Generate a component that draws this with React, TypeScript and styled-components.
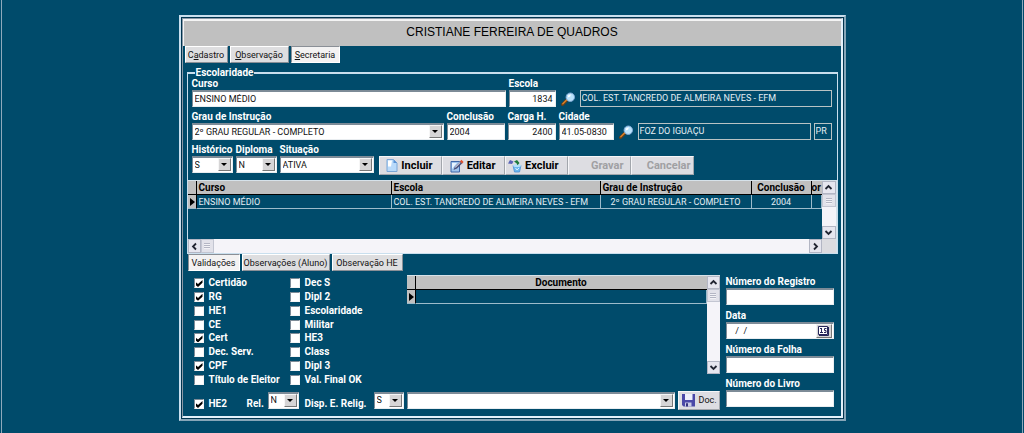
import React from "react";
import styled, { createGlobalStyle, css } from "styled-components";

const navy = "#004b6b";
const silver = "#c0c0c0";
const pale = "#c9dfee";

const GlobalStyle = createGlobalStyle`
  *, *::before, *::after { box-sizing: border-box; }
  body {
    margin: 0;
    background: ${navy};
    color: #fff;
    font: 9px/12px Roboto, "Liberation Sans", Arial, sans-serif;
  }
  button, input, select { font: inherit; margin: 0; border-radius: 0; }
`;

const Page = styled.main`
  min-height: 100vh;
  margin: 0 1px;
  padding-top: 15px;
  border: solid #8fa9bb;
  border-width: 0 1px;
`;

const Frame = styled.div`
  width: 100%;
  max-width: 667px;
  margin: 0 auto;
  padding: 1px;
  border: 2px solid ${pale};
  border-right-color: #86a6b8;
  border-bottom-color: #86a6b8;
  background: #00344f;
`;

const Panel = styled.div`
  border: 1px solid #8b98a6;
  border-right: 2px solid #e3f1fa;
  border-bottom: 2px solid #e3f1fa;
  padding-bottom: 6px;
  background: ${navy};
`;

const Title = styled.h1`
  margin: 0;
  height: 27px;
  border-top: 2px solid #f4f4f4;
  border-left: 1px solid #f4f4f4;
  background: ${silver};
  color: #000;
  text-align: center;
  font: 12px/22px "Liberation Sans", Arial, sans-serif;
`;

const Tabs = styled.div`
  display: flex;
  gap: 2px;
  padding-left: ${(p: { $inset: number }) => p.$inset}px;
`;

const Tab = styled.button<{ $active?: boolean; $wide?: number }>`
  width: ${(p) => p.$wide}px;
  height: 17px;
  padding: 0;
  white-space: nowrap;
  color: #111;
  line-height: 14px;
  border: 1px solid #fff;
  border-right-color: #8a8f96;
  border-bottom-color: #8a8f96;
  background: #dedee0;
  ${(p) => p.$active && css`
    background: #f3f2f2;
    border-color: #8a8f96 #fff #fff #8a8f96;
  `}
`;

const Group = styled.fieldset`
  min-width: 0;
  margin: 4px 3px 0 4px;
  padding: 0;
  border: 1px solid ${pale};
  border-top-width: 2px;
`;

const boldText = css`
  font: bold 10px/12px Roboto, "Liberation Sans", sans-serif;
  white-space: nowrap;
`;

const Legend = styled.legend`
  ${boldText}
  line-height: 11px;
  margin-left: 7px;
  padding: 0 1px;
`;

const Rows = styled.div`
  display: flex;
  flex-direction: column;
  gap: 4px;
  padding: 0 5px 0 4px;
`;

const FormRow = styled.div`
  display: flex;
  align-items: flex-start;
  gap: 3px;
`;

const FieldBox = styled.div<{ $w?: number }>`
  display: flex;
  flex-direction: column;
  flex: ${(p) => (p.$w ? `0 0 ${p.$w}px` : "1 1 0")};
  min-width: 0;
`;

const Label = styled.label`
  ${boldText}
`;

const sunken = css`
  width: 100%;
  height: 17px;
  padding: 0 2px 1px;
  border: 1px solid #e9edf0;
  border-top: 2px solid #7d8b97;
  border-left-color: #7d8b97;
  background: #fff;
  color: #111;
  outline: none;
`;

const TextBox = styled.input<{ $right?: boolean }>`
  ${sunken}
  text-align: ${(p) => (p.$right ? "right" : "left")};
`;

const ReadOnlyBox = styled.input<{ $w?: number }>`
  flex: ${(p) => (p.$w ? `0 0 ${p.$w}px` : "1 1 0")};
  min-width: 0;
  height: 17px;
  margin-top: 12px;
  padding: 0 1px 1px;
  border: 1px solid #b9c3c4;
  background: ${navy};
  color: #e4eef4;
  outline: 0;
`;

const Combo = styled.div`
  position: relative;
  display: flex;
  width: 100%;
`;

const ComboSelect = styled.select`
  ${sunken}
  appearance: none;
`;

const ComboArrow = styled.span`
  position: absolute;
  right: 2px;
  top: 2px;
  width: 13px;
  height: 13px;
  pointer-events: none;
  border: 1px solid #f6f6f6;
  border-right-color: #777;
  border-bottom-color: #777;
  background: #d6d5d6;
  &::after {
    content: "";
    display: block;
    width: 6px;
    margin: 4px 0 0 2px;
    border: solid transparent;
    border-width: 3px 3px 0;
    border-top-color: #000;
  }
`;

const FindButton = styled.button`
  flex: 0 0 18px;
  height: 17px;
  margin-top: 12px;
  padding: 1px 0 0 2px;
  border: 0;
  background: none;
  line-height: 0;
`;

const ButtonBar = styled.div`
  display: flex;
  margin: 12px 0 0 2px;
`;

const ActionButton = styled.button`
  ${boldText}
  display: flex;
  align-items: center;
  justify-content: flex-end;
  gap: 3px;
  width: 63px;
  height: 19px;
  padding: 0 8px 0 0;
  border: 1px solid #f6f6f8;
  border-right-color: #a2a6ac;
  border-bottom-color: #a2a6ac;
  background: #dddde2;
  color: #000;
  font-size: 11px;
  &:disabled { color: #a0a0a3; padding-right: 6px; }
  &:last-child { padding-right: 2px; }
`;

const GridFrame = styled.div`
  display: grid;
  grid-template-columns: 1fr 14px;
  grid-template-rows: 58px 14px;
  margin-top: 5px;
  border-top: 1px solid #d6e2ea;
  border-right: 1px solid #d6e2ea;
  background: ${navy};
`;

const DataTable = styled.table`
  width: 100%;
  align-self: start;
  table-layout: fixed;
  border-collapse: separate;
  border-spacing: 0;
`;

const HeadCell = styled.th<{ $center?: boolean }>`
  ${boldText}
  height: 14px;
  padding: 0 2px;
  overflow: hidden;
  border-right: 1px solid #000;
  border-bottom: 1px solid #000;
  background: ${silver};
  color: #000;
  text-align: ${(p) => (p.$center ? "center" : "left")};
  &:last-child { padding: 0; border-right: 0; }
`;

const Cell = styled.td<{ $center?: boolean }>`
  height: 14px;
  padding: 0 2px;
  overflow: hidden;
  white-space: nowrap;
  border-right: 1px solid #9dbccb;
  border-bottom: 1px solid #9dbccb;
  color: #e4eef4;
  text-align: ${(p) => (p.$center ? "center" : "left")};
`;

const MarkerCell = styled.td`
  height: 14px;
  padding: 0 0 0 2px;
  border-right: 1px solid #000;
  border-bottom: 1px solid #9dbccb;
  background: ${silver};
  &::after {
    content: "";
    display: block;
    width: 5px;
    border: solid transparent;
    border-width: 4px 0 4px 5px;
    border-left-color: #000;
  }
`;

const ScrollTrack = styled.div<{ $across?: boolean }>`
  display: flex;
  flex-direction: ${(p) => (p.$across ? "row" : "column")};
  background: #f5f4f9;
`;

const ScrollButton = styled.button`
  display: grid;
  place-items: center;
  flex: 0 0 13px;
  min-width: 13px;
  padding: 0;
  border: 1px solid #b3b6c4;
  background: #e6e6ef;
  line-height: 0;
`;

const ScrollThumb = styled.span`
  flex: 0 0 13px;
  display: grid;
  place-items: center;
  border: 1px solid #c3c6d2;
  background: #e2e2ea;
  &::after {
    content: "";
    width: 6px;
    height: 6px;
    background: repeating-linear-gradient(#b4b6c4 0 1px, #f2f2f6 1px 2px);
  }
`;

const Spacer = styled.span`
  flex: 1;
`;

const Corner = styled.span`
  background: #dcdce0;
`;

const Lower = styled.section`
  display: flex;
  align-items: flex-start;
  gap: 6px;
  padding: 4px 7px 0 11px;
`;

const LowerMain = styled.div`
  flex: 1;
  min-width: 0;
`;

const LowerTop = styled.div`
  display: flex;
  height: 115px;
  align-items: flex-start;
`;

const Checks = styled.div`
  display: grid;
  grid-template-columns: 96px 117px;
  grid-template-rows: repeat(8, 12px);
  grid-auto-flow: column;
  align-content: space-between;
  height: 111px;
  padding-top: 2px;
`;

const CheckLabel = styled.label`
  ${boldText}
  display: flex;
  align-items: center;
  gap: 5px;
`;

const CheckBox = styled.input`
  appearance: none;
  width: 10px;
  height: 10px;
  border: 1px solid #f4f4f4;
  border-top-color: #7d8b97;
  border-left-color: #7d8b97;
  background: #fff;
  &:checked::after {
    content: "";
    display: block;
    width: 7px;
    height: 7px;
    margin: 1px 0 0 1px;
    background: #000;
    clip-path: polygon(0 29%, 36% 58%, 100% 0, 100% 40%, 36% 100%, 0 70%);
  }
`;

const DocGrid = styled.div`
  flex: 1;
  display: grid;
  grid-template-columns: 1fr 13px;
  height: 99px;
  border-top: 1px solid #d6e2ea;
`;

const BottomRow = styled.div`
  display: flex;
  align-items: center;
  height: 20px;
`;

const LowLabel = styled.div<{ $w: number }>`
  flex: 0 0 ${(p) => p.$w}px;
  align-self: flex-end;
`;

const ComboSlot = styled.div<{ $w?: number; $gap: number }>`
  flex: ${(p) => (p.$w ? `0 0 ${p.$w}px` : "1")};
  margin-right: ${(p) => p.$gap}px;
`;

const DocButton = styled.button`
  display: flex;
  align-items: center;
  gap: 4px;
  width: 42px;
  height: 19px;
  padding: 0 0 0 3px;
  border: 1px solid #f6f6f8;
  border-right-color: #a2a6ac;
  border-bottom-color: #a2a6ac;
  background: #dddde2;
  color: #111;
`;

const Registry = styled.div`
  flex: 0 0 108px;
  display: flex;
  flex-direction: column;
  gap: 5px;
  padding-top: 1px;
`;

const DateBox = styled.div`
  position: relative;
  display: flex;
`;

const CalendarButton = styled.button`
  position: absolute;
  right: 2px;
  top: 2px;
  width: 16px;
  height: 14px;
  padding: 0;
  border: 1px solid #f4f4f4;
  border-right-color: #777;
  border-bottom-color: #777;
  background: #d6d5d6;
  line-height: 0;
`;

const Magnifier = () => (
  <svg width="15" height="14" viewBox="0 0 15 14" aria-hidden="true">
    <path d="M1.500 12.500 6 8" stroke="#6b3f14" strokeWidth="3" strokeLinecap="round" />
    <path d="M1.800 11.800 5.800 7.800" stroke="#d9822b" strokeWidth="1.400" strokeLinecap="round" />
    <circle cx="9.300" cy="5.200" r="4.200" fill="#b9e2fb" stroke="#7fa9d6" strokeWidth="1" />
    <path d="M6.800 5.400a2.600 2.600 0 0 1 3-2.800l-.6 2z" fill="#fff" />
  </svg>
);

const PageIcon = () => (
  <svg width="12" height="13" viewBox="0 0 12 13" aria-hidden="true">
    <path d="M1 .5h6.500L11 4v8.500H1z" fill="#b9dafa" stroke="#7ba6d6" />
    <path d="M2 1.500h4l-1 6H2z" fill="#fff" />
    <path d="M7.500.5V4H11z" fill="#5b93d6" />
  </svg>
);

const EditIcon = () => (
  <svg width="14" height="14" viewBox="0 0 14 14" aria-hidden="true">
    <path d="M1 2.500h8.500v10.500H1z" fill="#9fc4ee" stroke="#3f66a8" />
    <path d="M2 4h5L2 10z" fill="#e8f4ff" />
    <path d="M3.500 11 5 7.500 10.500 2l2 2L7 9.600z" fill="#4a4f78" />
    <path d="m10 2.400 1.400-1.600 2.200 2.200-1.500 1.500z" fill="#e0502e" />
    <path d="m4.800 8 5-5 .8.800-5 5z" fill="#c9cde0" />
  </svg>
);

const DeleteIcon = () => (
  <svg width="14" height="14" viewBox="0 0 14 14" aria-hidden="true">
    <path d="M5 6.500h8l-1.500 6.500H6.500z" fill="#6db8ee" stroke="#4c8dd0" strokeWidth=".8" />
    <ellipse cx="9" cy="6.600" rx="4" ry="1.500" fill="#b5e0fa" />
    <path d="M0 4.500 2 1l3.500 1.500L4 5z" fill="#5a64b8" />
    <path d="m6 2.500 3-1.500 2.500 3-2 2.300-1-2z" fill="#1d7a3c" />
    <path d="m7.500 9 1.500 2L11 9" fill="none" stroke="#d5efff" />
  </svg>
);

const FloppyIcon = () => (
  <svg width="13" height="14" viewBox="0 0 13 14" aria-hidden="true">
    <path d="M0 1h13v12.500H1.500L0 12z" fill="#4a48a8" />
    <path d="M3 1h7.500v6H3z" fill="#eef0fb" />
    <path d="M3 9.500h6.500v4H3z" fill="#c9cbe6" />
    <path d="M4 10.300h2v3.200H4z" fill="#33317f" />
  </svg>
);

const CalendarIcon = () => (
  <svg width="11" height="10" viewBox="0 0 11 10" aria-hidden="true">
    <path d="M.5.5h9v8h-9z" fill="#fff" stroke="#26265a" />
    <path d="M10.500 1v8.500H1" fill="none" stroke="#26265a" />
    <path d="M3.500 2v5M2 2.500h1.500M2 6.500h3M8.500 2.500h-2v2h1.500v2H6" fill="none" stroke="#26265a" />
  </svg>
);

const turns = { up: 0, right: 90, down: 180, left: 270 };

const Arrow = ({ to }: { to: keyof typeof turns }) => (
  <ScrollButton aria-label={to}>
    <svg width="9" height="9" viewBox="0 0 9 9" aria-hidden="true">
      <path d="M1.500 6 4.500 3l3 3" transform={`rotate(${turns[to]} 4.500 4.500)`} fill="none" stroke="#222633" strokeWidth="1.800" />
    </svg>
  </ScrollButton>
);

const VerticalScroll = () => (
  <ScrollTrack>
    <Arrow to="up" />
    <ScrollThumb />
    <Spacer />
    <Arrow to="down" />
  </ScrollTrack>
);

type FieldProps = { id: string; label: string; value?: string; w?: number; right?: boolean };

const Field = ({ id, label, value = "", w, right }: FieldProps) => (
  <FieldBox $w={w}>
    <Label htmlFor={id}>{label}</Label>
    <TextBox id={id} defaultValue={value} $right={right} />
  </FieldBox>
);

const Dropdown = ({ id, value, name }: { id: string; value: string; name?: string }) => (
  <Combo>
    <ComboSelect id={id} aria-label={name}>
      <option>{value}</option>
    </ComboSelect>
    <ComboArrow />
  </Combo>
);

const SelectField = ({ id, label, value = "", w }: FieldProps) => (
  <FieldBox $w={w}>
    <Label htmlFor={id}>{label}</Label>
    <Dropdown id={id} value={value} />
  </FieldBox>
);

const Check = ({ text, on }: { text: string; on?: boolean }) => (
  <CheckLabel>
    <CheckBox type="checkbox" defaultChecked={on} />
    {text}
  </CheckLabel>
);

const checks: [string, boolean][] = [
  ["Certidão", true], ["RG", true], ["HE1", false], ["CE", false],
  ["Cert", true], ["Dec. Serv.", false], ["CPF", true], ["Título de Eleitor", false],
  ["Dec S", false], ["Dipl 2", false], ["Escolaridade", false], ["Militar", false],
  ["HE3", false], ["Class", false], ["Dipl 3", false], ["Val. Final OK", false],
];

export default function App() {
  return (
    <Page>
      <GlobalStyle />
      <Frame>
        <Panel>
          <Title>CRISTIANE FERREIRA DE QUADROS</Title>
          <Tabs $inset={2}>
            <Tab $wide={43}>C<u>a</u>dastro</Tab>
            <Tab $wide={59}><u>O</u>bservação</Tab>
            <Tab $wide={49} $active><u>S</u>ecretaria</Tab>
          </Tabs>

          <Group>
            <Legend>Escolaridade</Legend>
            <Rows>
              <FormRow>
                <Field id="curso" label="Curso" value="ENSINO MÉDIO" />
                <Field id="escola" label="Escola" value="1834" w={47} right />
                <FindButton aria-label="Buscar escola"><Magnifier /></FindButton>
                <ReadOnlyBox $w={252} readOnly aria-label="Nome da escola" value="COL. EST. TANCREDO DE ALMEIRA NEVES - EFM" />
              </FormRow>
              <FormRow>
                <SelectField id="grau" label="Grau de Instrução" value="2º GRAU REGULAR - COMPLETO" />
                <Field id="conclusao" label="Conclusão" value="2004" w={58} />
                <Field id="carga" label="Carga H." value="2400" w={48} right />
                <Field id="cidade" label="Cidade" value="41.05-0830" w={55} />
                <FindButton aria-label="Buscar cidade"><Magnifier /></FindButton>
                <ReadOnlyBox $w={173} readOnly aria-label="Nome da cidade" value="FOZ DO IGUAÇU" />
                <ReadOnlyBox $w={18} readOnly aria-label="UF" value="PR" />
              </FormRow>
              <FormRow>
                <SelectField id="historico" label="Histórico" value="S" w={41} />
                <SelectField id="diploma" label="Diploma" value="N" w={41} />
                <SelectField id="situacao" label="Situação" value="ATIVA" w={94} />
                <ButtonBar>
                  <ActionButton><PageIcon />Incluir</ActionButton>
                  <ActionButton><EditIcon />Editar</ActionButton>
                  <ActionButton><DeleteIcon />Excluir</ActionButton>
                  <ActionButton disabled>Gravar</ActionButton>
                  <ActionButton disabled>Cancelar</ActionButton>
                </ButtonBar>
              </FormRow>
            </Rows>

            <GridFrame>
              <DataTable>
                <colgroup>
                  <col style={{ width: 9 }} />
                  <col />
                  <col style={{ width: 209 }} />
                  <col style={{ width: 151 }} />
                  <col style={{ width: 60 }} />
                  <col style={{ width: 10 }} />
                </colgroup>
                <thead>
                  <tr>
                    <HeadCell />
                    <HeadCell>Curso</HeadCell>
                    <HeadCell>Escola</HeadCell>
                    <HeadCell>Grau de Instrução</HeadCell>
                    <HeadCell $center>Conclusão</HeadCell>
                    <HeadCell>or</HeadCell>
                  </tr>
                </thead>
                <tbody>
                  <tr>
                    <MarkerCell />
                    <Cell>ENSINO MÉDIO</Cell>
                    <Cell>COL. EST. TANCREDO DE ALMEIRA NEVES - EFM</Cell>
                    <Cell $center>2º GRAU REGULAR - COMPLETO</Cell>
                    <Cell $center>2004</Cell>
                    <Cell />
                  </tr>
                </tbody>
              </DataTable>
              <VerticalScroll />
              <ScrollTrack $across>
                <Arrow to="left" />
                <ScrollThumb />
                <Spacer />
                <Arrow to="right" />
              </ScrollTrack>
              <Corner />
            </GridFrame>
          </Group>

          <Tabs $inset={5}>
            <Tab $wide={52} $active>Validações</Tab>
            <Tab $wide={88}>Observações (Aluno)</Tab>
            <Tab $wide={71}>Observação HE</Tab>
          </Tabs>

          <Lower>
            <LowerMain>
              <LowerTop>
                <Checks>
                  {checks.map(([text, on]) => <Check key={text} text={text} on={on} />)}
                </Checks>
                <DocGrid>
                  <DataTable>
                    <colgroup>
                      <col style={{ width: 9 }} />
                      <col />
                    </colgroup>
                    <thead>
                      <tr>
                        <HeadCell />
                        <HeadCell $center>Documento</HeadCell>
                      </tr>
                    </thead>
                    <tbody>
                      <tr>
                        <MarkerCell />
                        <Cell />
                      </tr>
                    </tbody>
                  </DataTable>
                  <VerticalScroll />
                </DocGrid>
              </LowerTop>
              <BottomRow>
                <LowLabel $w={53}><Check text="HE2" on /></LowLabel>
                <LowLabel $w={21}><Label htmlFor="rel">Rel.</Label></LowLabel>
                <ComboSlot $w={31} $gap={6}><Dropdown id="rel" value="N" /></ComboSlot>
                <LowLabel $w={69}><Label htmlFor="disp">Disp. E. Relig.</Label></LowLabel>
                <ComboSlot $w={30} $gap={3}><Dropdown id="disp" value="S" /></ComboSlot>
                <ComboSlot $gap={3}><Dropdown id="documento" name="Documento" value="" /></ComboSlot>
                <DocButton><FloppyIcon />Doc.</DocButton>
              </BottomRow>
            </LowerMain>

            <Registry>
              <Field id="registro" label="Número do Registro" />
              <FieldBox>
                <Label htmlFor="data">Data</Label>
                <DateBox>
                  <TextBox id="data" defaultValue="   /  /" />
                  <CalendarButton aria-label="Calendário"><CalendarIcon /></CalendarButton>
                </DateBox>
              </FieldBox>
              <Field id="folha" label="Número da Folha" />
              <Field id="livro" label="Número do Livro" />
            </Registry>
          </Lower>
        </Panel>
      </Frame>
    </Page>
  );
}
